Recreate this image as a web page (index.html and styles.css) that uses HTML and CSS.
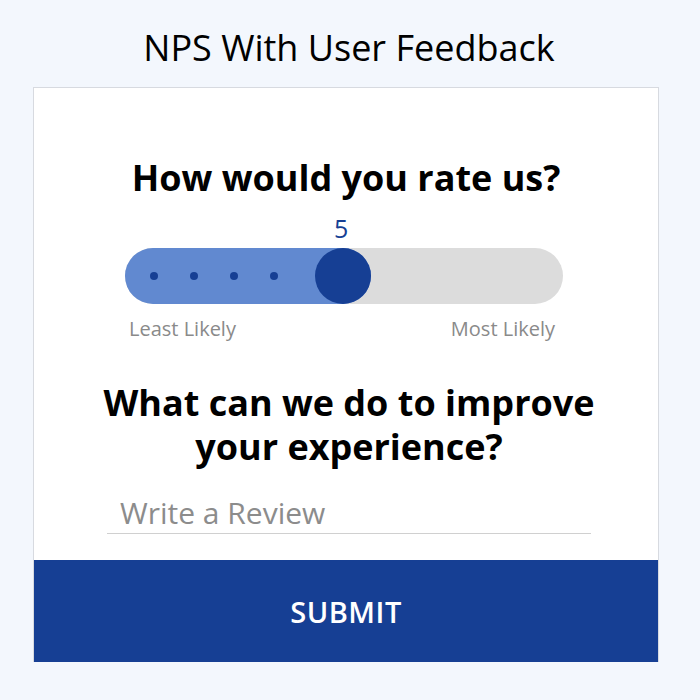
FILE: index.html
```html
<!DOCTYPE html>
<html>
<head>
    <title>NPS With User Feedback</title>
    <link rel="stylesheet" href="styles.css">
</head>
<body>
    <h1 class="page-title">NPS With User Feedback</h1>
    <div class="card">
        <div class="card-body">
            <h2 class="question">How would you rate us?</h2>
            <div class="rating">
                <div class="rating-value">5</div>
                <div class="track">
                    <div class="track-fill">
                        <span class="dot"></span>
                        <span class="dot"></span>
                        <span class="dot"></span>
                        <span class="dot"></span>
                        <span class="thumb"></span>
                    </div>
                </div>
                <div class="rating-labels">
                    <span>Least Likely</span>
                    <span>Most Likely</span>
                </div>
            </div>
            <h2 class="question improve">What can we do to improve your experience?</h2>
            <input class="review" type="text" placeholder="Write a Review">
        </div>
        <button class="submit">SUBMIT</button>
    </div>
</body>
</html>
```

FILE: styles.css
```css
body {
    font-family: "Open Sans", "Noto Sans", sans-serif;
    background-color: #f3f7fd;
    margin: 0;
    padding: 0 41px 0 33px;
}

.page-title {
    margin: 0;
    padding: 24px 0 16px 6px;
    font-size: 36px;
    font-weight: 400;
    line-height: 47px;
    text-align: center;
    color: #000;
}

.card {
    background-color: #fff;
    border: 1px solid #d7dae0;
    border-bottom: none;
}

.card-body {
    padding: 68px 0 26px;
    display: flex;
    flex-direction: column;
    align-items: center;
}

.question {
    margin: 0;
    font-size: 36px;
    font-weight: 700;
    line-height: 44px;
    text-align: center;
    color: #000;
}

.improve {
    width: 540px;
    padding-left: 6px;
}

.rating {
    width: 438px;
    margin: 12px 0 40px;
    padding-right: 4px;
}

.rating-value {
    width: 436px;
    text-indent: 209px;
    font-size: 25px;
    line-height: 32px;
    color: #163f94;
}

.track {
    margin-top: 4px;
    height: 56px;
    border-radius: 28px;
    background-color: #dcdcdc;
}

.track-fill {
    width: 246px;
    height: 56px;
    border-radius: 28px;
    background-color: #6189d0;
    display: flex;
    align-items: center;
    padding-left: 25px;
    box-sizing: border-box;
}

.dot {
    width: 8px;
    height: 8px;
    border-radius: 50%;
    background-color: #163f94;
    margin-right: 32px;
}

.thumb {
    width: 56px;
    height: 56px;
    border-radius: 50%;
    background-color: #163f94;
    margin-left: 5px;
}

.rating-labels {
    display: flex;
    justify-content: space-between;
    padding: 0 8px 0 4px;
    margin-top: 13px;
    font-size: 20px;
    line-height: 24px;
    color: #8a8a8a;
}

.review {
    width: 484px;
    margin-top: 25px;
    margin-left: 6px;
    padding: 0 13px 1px;
    box-sizing: border-box;
    border: none;
    border-bottom: 1px solid #d0d0d0;
    font-family: inherit;
    font-size: 30px;
    line-height: 38px;
    color: #333;
    outline: none;
}

.review::placeholder {
    color: #8c8c8c;
}

.submit {
    display: block;
    width: 100%;
    height: 102px;
    border: none;
    background-color: #163f94;
    color: #fff;
    font-family: inherit;
    font-size: 29px;
    font-weight: 600;
    letter-spacing: 0.5px;
    cursor: pointer;
}
```
